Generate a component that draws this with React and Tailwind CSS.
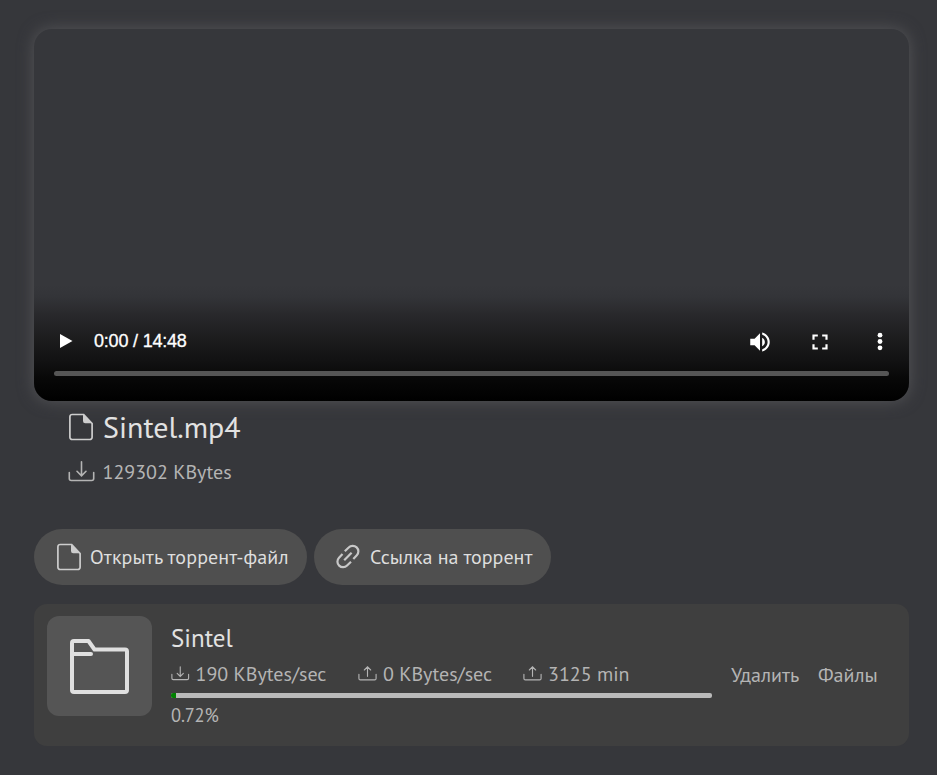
const Doc = () => (
  <svg className="h-[28px] w-[26px] shrink-0" viewBox="0 0 26 28" fill="none" stroke="#cdcdcd" strokeWidth="1.7">
    <path d="M15.7 1.500H4.200A2.300 2.300 0 0 0 1.900 3.800v20.400a2.300 2.300 0 0 0 2.300 2.300h17.600a2.300 2.300 0 0 0 2.300-2.300V10.500z" />
    <path d="M15 1.2v6.8a2.2 2.2 0 0 0 2.2 2.2h7.3z" fill="#cdcdcd" stroke="none" />
  </svg>
);

const Tray = ({ up = false, className }) => (
  <svg className={className} viewBox="0 0 27 21" fill="none" stroke="#b4b4b4" strokeWidth="1.6" strokeLinecap="round">
    <path d="M1.3 11.5v6a2 2 0 0 0 2 2h20.4a2 2 0 0 0 2-2v-6" />
    {up ? <path d="M13.5 14.5V1M9 5.5 13.5 1 18 5.5" /> : <path d="M13.5 .8v14M9 10.3l4.500 4.500 4.500-4.500" />}
  </svg>
);

const LinkIcon = () => (
  <svg className="h-[26px] w-[26px] shrink-0" viewBox="0 0 26 26" fill="none" stroke="#c8c8c8" strokeWidth="2.2">
    <path d="M9.800 7.200 13.700 3.500A5.600 5.600 0 0 1 21.800 11.300L18.300 14.900" />
    <path d="M16 17.800 12.100 21.500A5.600 5.600 0 0 1 4 13.700L7.500 10.100" />
    <path d="M9.200 16.300 16.600 8.700" />
  </svg>
);

export default function App() {
  return (
    <div className="h-[775px] w-[937px] overflow-hidden bg-[#36373b] pl-[34px] pt-[29px] font-['PT_Sans','Noto_Sans',sans-serif] text-[20px] text-[#b4b4b4]">
      <div className="flex h-[372px] w-[875px] flex-col justify-end overflow-hidden rounded-[18px] shadow-[0_0_16px_#555558]">
        <div className="flex h-[116px] flex-col bg-[linear-gradient(to_bottom,#36373b_0%,#333438_10%,#29292c_25%,#1a1a1b_50%,#121213_65%,#080808_80%,#000_100%)] px-5 pt-[36px]">
          <div className="flex h-[40px] items-center text-white">
            <svg className="ml-[5px] h-[16px] w-[14px]" viewBox="0 0 14 16" fill="white"><path d="M1 1v14L13.500 8z" /></svg>
            <span className="ml-[21px] font-['Liberation_Sans',sans-serif] text-[18px] tracking-[-0.200px] [-webkit-text-stroke:0.300px_white]">0:00 / 14:48</span>
            <div className="ml-auto mr-[0.500px] flex items-center pt-px">
              <svg className="size-[26px]" viewBox="0 0 24 24" fill="white"><path d="M3 9v6h4l5 5V4L7 9H3zm13.500 3c0-1.770-1.020-3.290-2.500-4.030v8.050c1.480-.730 2.500-2.250 2.500-4.020zM14 3.230v2.060c2.890.860 5 3.540 5 6.710s-2.110 5.850-5 6.710v2.060c4.010-.910 7-4.490 7-8.770s-2.990-7.860-7-8.770z" /></svg>
              <svg className="ml-[34px] size-[26px]" viewBox="0 0 24 24" fill="white"><path d="M7 14H5v5h5v-2H7v-3zm-2-4h2V7h3V5H5v5zm12 7h-3v2h5v-5h-2v3zM14 5v2h3v3h2V5h-5z" /></svg>
              <svg className="ml-[34px] mr-[-4px] size-[26px]" viewBox="0 0 26 26" fill="white"><circle cx="13" cy="6.200" r="2.400" /><circle cx="13" cy="12.500" r="2.400" /><circle cx="13" cy="18.800" r="2.400" /></svg>
            </div>
          </div>
          <div className="mt-[10px] h-[5px] rounded-full bg-[#565656]" />
        </div>
      </div>

      <div className="ml-[34px] mt-[5px] flex h-[40px] items-center">
        <div className="mt-[1px]"><Doc /></div>
        <span className="ml-[9px] whitespace-nowrap text-[30px] text-[#e2e2e2]">Sintel.mp4</span>
      </div>
      <div className="ml-[34px] mt-[10px] flex h-[32px] items-center">
        <Tray className="ml-[-0.500px] mt-[-2px] h-[21px] w-[27px] shrink-0" />
        <span className="ml-[8px] whitespace-nowrap">129302 KBytes</span>
      </div>

      <div className="mt-[41px] flex gap-[7px] text-[#dedede]">
        <button className="flex h-[56px] w-[273px] items-center rounded-full bg-[#4f4f4f] pl-[22px]">
          <Doc />
          <span className="ml-[8px] whitespace-nowrap tracking-[0.120px]">Открыть торрент-файл</span>
        </button>
        <button className="flex h-[56px] w-[237px] items-center rounded-full bg-[#4f4f4f] pl-[21px]">
          <LinkIcon />
          <span className="ml-[9px] whitespace-nowrap">Ссылка на торрент</span>
        </button>
      </div>

      <div className="mt-[19px] flex h-[142px] w-[875px] rounded-[13px] bg-[#3f3f3f] pl-[13px] pt-[12px]">
        <div className="flex h-[100px] w-[105px] items-center justify-center rounded-[12px] bg-[#555]">
          <svg className="mt-[1px] h-[55px] w-[59px]" viewBox="0 0 59 55" fill="none" stroke="#e0e0e0" strokeWidth="4" strokeLinejoin="round" strokeLinecap="round">
            <path d="M2 4a2 2 0 0 1 2-2H18.500L24.500 10.500H55a2 2 0 0 1 2 2v38.500a2 2 0 0 1-2 2H4a2 2 0 0 1-2-2zM2 15H21" />
          </svg>
        </div>
        <div className="ml-[19px] w-[541px]">
          <div className="mt-[5px] h-[34px] whitespace-nowrap text-[25px] leading-[34px] text-[#e2e2e2]">Sintel</div>
          <div className="mt-[4px] grid h-[28px] grid-cols-[187px_165px_1fr] items-center whitespace-nowrap">
            <div className="flex items-center gap-[6px]"><Tray className="-mt-[2px] h-[17px] w-[18.500px]" /><span>190 KBytes/sec</span></div>
            <div className="flex items-center gap-[6px]"><Tray up className="-mt-[2px] h-[17px] w-[19px]" /><span>0 KBytes/sec</span></div>
            <div className="flex items-center gap-[6px]"><Tray up className="-mt-[2px] h-[17px] w-[19px]" /><span>3125 min</span></div>
          </div>
          <div className="mt-[6px] h-[5px] overflow-hidden rounded-[2px] bg-[#bababa]"><div className="h-full w-[5px] bg-[#008000]" /></div>
          <div className="mt-[4px] text-[18.500px] leading-[26px] tracking-[-0.200px]">0.72%</div>
        </div>
        <div className="ml-[19px] mt-[45px] flex h-[28px] items-center whitespace-nowrap">
          <span className="w-[87px]">Удалить</span>
          <span>Файлы</span>
        </div>
      </div>
    </div>
  );
}
